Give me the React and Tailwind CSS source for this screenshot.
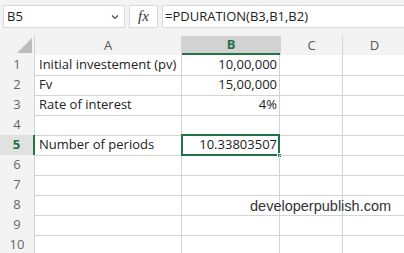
import React from "react";

const rows = [
  { n: "1", a: "Initial investement (pv)", b: "10,00,000" },
  { n: "2", a: "Fv", b: "15,00,000" },
  { n: "3", a: "Rate of interest", b: "4%" },
  { n: "4", a: "", b: "" },
  { n: "5", a: "Number of periods", b: "10.33803507", sel: true },
  { n: "6", a: "", b: "" },
  { n: "7", a: "", b: "" },
  { n: "8", a: "", b: "", wm: true },
  { n: "9", a: "", b: "" },
  { n: "10", a: "", b: "" },
];

export default function App() {
  return (
    <div
      className="w-[404px] h-[253px] overflow-hidden bg-white text-[#222]"
      style={{ fontFamily: '"Open Sans", "Noto Sans", sans-serif' }}
    >
      {/* toolbar */}
      <div className="h-[36px] bg-[#f3f3f3] pt-[5px] pl-[3px] flex gap-[4px]">
        <div className="w-[122px] h-[23px] bg-white border border-[#dadada] flex items-center justify-between pl-[3px] pr-[4px] text-[13px]">
          <span>B5</span>
          <svg width="8" height="6" viewBox="0 0 8 6" className="mr-[1px]">
            <path d="M1 1.5 L4 4.5 L7 1.5" stroke="#444" strokeWidth="1.1" fill="none" />
          </svg>
        </div>
        <div className="w-[29px] h-[23px] bg-white border border-[#dadada] flex items-center justify-center">
          <span
            className="italic text-[15px] text-[#333] leading-none"
            style={{ fontFamily: '"Liberation Serif", "DejaVu Serif", serif' }}
          >
            fx
          </span>
        </div>
        <div className="flex-1 h-[23px] bg-white border border-[#dadada] border-r-0 flex items-center pl-[2px] text-[13px]">
          =PDURATION(B3,B1,B2)
        </div>
      </div>

      {/* column header */}
      <div className="grid grid-cols-[35px_147px_98px_63px_1fr] h-[19px] bg-[#f3f3f3] text-[13px] text-[#555]">
        <div className="relative border-r border-[#d4d4d4]">
          <div
            className="absolute right-[2px] bottom-[2px] w-[15px] h-[15px] bg-[#bcbcbc]"
            style={{ clipPath: "polygon(100% 0, 100% 100%, 0 100%)" }}
          />
        </div>
        <div className="flex items-center justify-center border-r border-[#d4d4d4] leading-none">A</div>
        <div className="flex items-center justify-center bg-[#d2d2d2] border-b-2 border-[#217346] text-[#217346] font-bold leading-none">
          B
        </div>
        <div className="flex items-center justify-center border-r border-[#d4d4d4] border-l border-l-[#d4d4d4] leading-none">C</div>
        <div className="flex items-center justify-center pl-[2px] leading-none">D</div>
      </div>

      {/* rows */}
      {rows.map((r) => (
        <div
          key={r.n}
          className="grid grid-cols-[35px_147px_98px_63px_1fr] h-[20px] text-[13px]"
        >
          <div
            className={
              r.sel
                ? "flex items-center justify-center bg-[#e1e1e1] border-b border-[#d4d4d4] border-r-2 border-r-[#217346] text-[#217346] font-bold"
                : "flex items-center justify-center bg-[#f3f3f3] border-b border-[#d4d4d4] border-r border-r-[#d4d4d4] text-[#666]"
            }
          >
            {r.n}
          </div>
          <div className="flex items-center pl-[4px] border-b border-r border-[#d4d4d4] whitespace-nowrap">
            {r.a}
          </div>
          <div className="relative flex items-center justify-end pr-[2px] border-b border-r border-[#d4d4d4] whitespace-nowrap">
            {r.b}
            {r.sel && (
              <>
                <div className="absolute left-[-1px] top-[-1px] right-[-1px] bottom-[-1px] border-2 border-[#217346]" />
                <div className="absolute right-[-3px] bottom-[-3px] w-[5px] h-[5px] bg-[#217346] border border-white" />
              </>
            )}
          </div>
          <div className="relative border-b border-r border-[#d4d4d4]">
            {r.wm && (
              <span
                className="absolute left-[-30px] top-[1px] text-[14.5px] text-[#333] whitespace-nowrap"
                style={{ fontFamily: '"Liberation Sans", Arial, sans-serif' }}
              >
                developerpublish.com
              </span>
            )}
          </div>
          <div className="border-b border-[#d4d4d4]"></div>
        </div>
      ))}
    </div>
  );
}
